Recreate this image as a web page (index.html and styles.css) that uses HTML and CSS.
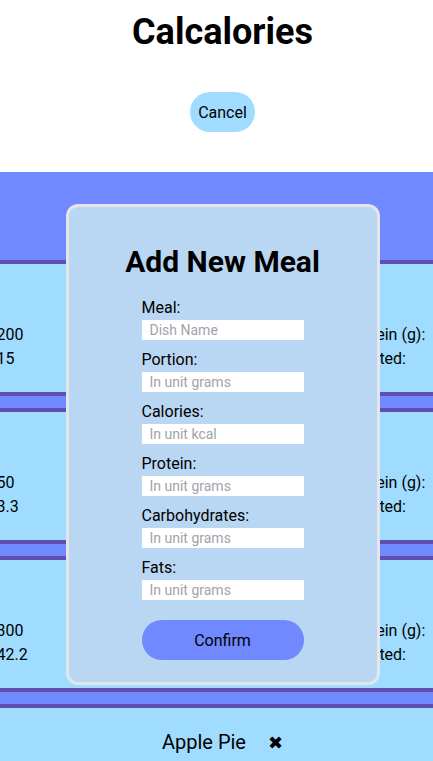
FILE: index.html
```html
<!DOCTYPE html>
<html lang="en">
<head>
    <meta charset="UTF-8">
    <meta name="viewport" content="width=device-width, initial-scale=1.0">
    <title>Calcalories</title>
    <link rel="stylesheet" href="styles.css">
</head>
<body>
<div class="app">

    <!-- Header -->
    <header class="top">
        <h1 class="app-title">Calcalories</h1>
        <button type="button" class="btn-cancel">Cancel</button>
    </header>

    <!-- Meal list -->
    <main class="meal-list">
        <div class="meal-card">
            <div class="meal-name">Chicken Salad <span class="remove">&#10006;</span></div>
            <div class="meal-stats">
                <span>Portion (g):</span><span>200</span>
                <span>Calories:</span><span>320</span>
                <span>Protein (g):</span><span>28</span>
                <span>Carbs (g):</span><span>15</span>
                <span>Fats (g):</span><span>12</span>
                <span>Created:</span><span>12/03/2024</span>
            </div>
        </div>
        <div class="meal-card">
            <div class="meal-name">Banana <span class="remove">&#10006;</span></div>
            <div class="meal-stats">
                <span>Portion (g):</span><span>50</span>
                <span>Calories:</span><span>45</span>
                <span>Protein (g):</span><span>0.5</span>
                <span>Carbs (g):</span><span>3.3</span>
                <span>Fats (g):</span><span>0.2</span>
                <span>Created:</span><span>12/03/2024</span>
            </div>
        </div>
        <div class="meal-card">
            <div class="meal-name">Spaghetti <span class="remove">&#10006;</span></div>
            <div class="meal-stats">
                <span>Portion (g):</span><span>300</span>
                <span>Calories:</span><span>470</span>
                <span>Protein (g):</span><span>17</span>
                <span>Carbs (g):</span><span>42.2</span>
                <span>Fats (g):</span><span>9</span>
                <span>Created:</span><span>13/03/2024</span>
            </div>
        </div>
        <div class="meal-card">
            <div class="meal-name">Apple Pie <span class="remove">&#10006;</span></div>
            <div class="meal-stats">
                <span>Portion (g):</span><span>120</span>
                <span>Calories:</span><span>290</span>
                <span>Protein (g):</span><span>2.4</span>
                <span>Carbs (g):</span><span>40</span>
                <span>Fats (g):</span><span>14</span>
                <span>Created:</span><span>13/03/2024</span>
            </div>
        </div>
    </main>

    <!-- Add meal popup -->
    <div class="modal">
        <h2 class="modal-title">Add New Meal</h2>
        <form id="mealForm" class="meal-form">
            <label for="meal">Meal:</label>
            <input type="text" id="meal" name="meal" placeholder="Dish Name">

            <label for="portion">Portion:</label>
            <input type="number" id="portion" name="portion" placeholder="In unit grams">

            <label for="calories">Calories:</label>
            <input type="number" id="calories" name="calories" placeholder="In unit kcal">

            <label for="protein">Protein:</label>
            <input type="number" id="protein" name="protein" placeholder="In unit grams">

            <label for="carbs">Carbohydrates:</label>
            <input type="number" id="carbs" name="carbs" placeholder="In unit grams">

            <label for="fats">Fats:</label>
            <input type="number" id="fats" name="fats" placeholder="In unit grams">

            <button type="button" class="btn-confirm">Confirm</button>
        </form>
    </div>

</div>
</body>
</html>
```

FILE: styles.css
```css
body {
    margin: 0;
    font-family: Roboto, "Liberation Sans", sans-serif;
    color: #000;
    background-color: #fff;
    overflow-x: hidden;
}
.app {
    position: relative;
    width: 445px;
}
.top {
    display: flex;
    flex-direction: column;
    align-items: center;
    padding: 11px 0 40px;
}
.app-title {
    margin: 0;
    font-size: 36px;
    line-height: 42px;
    font-weight: 700;
}
.btn-cancel {
    margin-top: 39px;
    height: 40px;
    padding: 0 8px;
    border: none;
    border-radius: 20px;
    background-color: #a0dcff;
    font-family: inherit;
    font-size: 16px;
    color: #000;
    cursor: pointer;
}
.meal-list {
    background-color: #7189ff;
    padding-top: 88px;
}
.meal-card {
    display: flex;
    flex-direction: column;
    align-items: center;
    margin-bottom: 12px;
    padding: 22px 0 21px;
    background-color: #a0dcff;
    border-top: 4px solid #5f4fb2;
    border-bottom: 4px solid #5f4fb2;
}
.meal-name {
    height: 24px;
    font-size: 20px;
    line-height: 24px;
    margin-bottom: 13px;
}
.remove {
    margin-left: 17px;
    font-family: "DejaVu Sans", sans-serif;
    font-size: 18px;
    line-height: 1;
    cursor: pointer;
}
.meal-stats {
    display: grid;
    grid-template-columns: 88px 80px 100px 170px 90px 100px;
    flex-shrink: 0;
    font-size: 16px;
    line-height: 24px;
    white-space: nowrap;
}
.modal {
    position: absolute;
    top: 204px;
    left: 0;
    right: 0;
    margin: 0 auto;
    box-sizing: border-box;
    width: 314px;
    height: 481px;
    padding-top: 37px;
    background-color: #b9d6f2;
    border: 3px solid #e3e5ea;
    border-radius: 12px;
}
.modal-title {
    margin: 0 0 19px;
    text-align: center;
    font-size: 30px;
    font-weight: 700;
}
.meal-form {
    display: flex;
    flex-direction: column;
    width: 162px;
    margin: 0 auto;
}
.meal-form label {
    font-size: 16px;
    line-height: 19px;
    margin-bottom: 3px;
}
.meal-form input {
    box-sizing: border-box;
    width: 100%;
    height: 20px;
    margin-bottom: 10px;
    padding: 0 8px;
    border: none;
    outline: none;
    background-color: #fff;
    font-family: inherit;
    font-size: 14px;
}
.meal-form input::placeholder {
    color: #9fa3ab;
}
.btn-confirm {
    margin-top: 10px;
    height: 40px;
    border: none;
    border-radius: 20px;
    background-color: #7189ff;
    font-family: inherit;
    font-size: 16px;
    color: #000;
    cursor: pointer;
}
```
